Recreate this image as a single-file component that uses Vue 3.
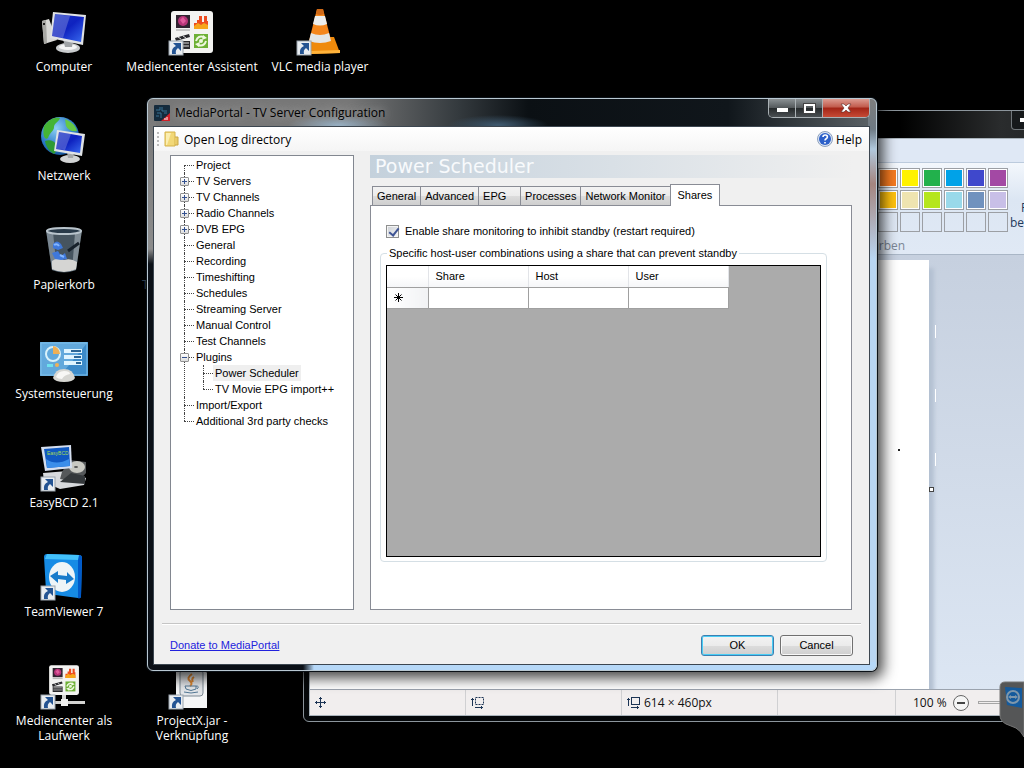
<template>
  <div class="desktop">
    <ul class="shortcuts">
      <li
        v-for="s in shortcuts"
        :key="s.icon"
        class="shortcut"
        :style="{ gridColumn: s.col, gridRow: s.row }"
      >
        <svg class="shortcut-icon" viewBox="0 0 48 48" aria-hidden="true">
          <g v-if="s.icon === 'computer'">
            <path d="M2 13 9 11 17 32 4 36z" fill="#d9d9d6" />
            <path d="M2 13 6 12 7 35 4 36z" fill="#a8a8a4" />
            <path d="M3 15h2v2H3z" fill="#222" />
            <ellipse cx="28" cy="40" rx="12" ry="5" fill="#c9ccce" />
            <ellipse cx="28" cy="39" rx="9" ry="3" fill="#f4f5f5" />
            <path d="M23 31 33 33 32 39 25 39z" fill="#9fa3a6" />
            <path d="M13 4 46 7 43 37 10 30z" fill="#e0e2e4" />
            <path d="M15 6 44 9 41 34 12 28z" fill="url(#screen)" />
            <path d="M15 6 30 8 23 30 12 28z" fill="#fff" opacity=".22" />
          </g>
          <g v-else-if="s.icon === 'network'">
            <circle cx="20" cy="19" r="19" fill="url(#globe)" />
            <path d="M4 9C9 2 15 0 20 1c-1 4-6 5-6 9s-4 5-6 11c-3 3-6-3-4-12z" fill="#45b435" />
            <path d="M25 2c7 3 11 7 12 12-5 1-9-1-11-5z" fill="#65c846" />
            <path d="M5 24c5-2 9 0 12 4 1 4-1 7-3 9-5-3-8-7-9-13z" fill="#2f9b35" />
            <ellipse cx="30" cy="42" rx="10" ry="4" fill="#d2d4d5" />
            <path d="M27 35h7l-1 6h-5z" fill="#a5a8aa" />
            <path d="M17 13 45 17 42 39 14 34z" fill="#dfe2e5" />
            <path d="M19 15 42 19 40 36 16 32z" fill="url(#screen)" />
            <path d="M19 15 31 17 25 33 16 32z" fill="#fff" opacity=".22" />
          </g>
          <g v-else-if="s.icon === 'trash'">
            <path d="M6 4 42 4 36 44Q24 49 12 44z" fill="#46545f" />
            <path d="M6 4 13 6 17 45 12 44z" fill="#9ba9b3" opacity=".6" />
            <path d="M42 4 35 7 32 45 36 44z" fill="#aab5bd" opacity=".6" />
            <path d="M12 35Q17 31 24 34 31 32 37 36L36 43Q24 49 12 43z" fill="#d5d5d3" />
            <path d="M28 25 39 17" stroke="#17212b" stroke-width="3" />
            <path d="M13 18q4-5 8 0l2 4-5 2-5-2zM12 27l6-2 3 5 4-3 2 6-6 1-6-1z" fill="#3f78db" />
            <path d="M14 19q3-2 5 1M20 29l4 2" stroke="#83b6ff" stroke-width="2" fill="none" />
            <ellipse cx="24" cy="5" rx="17" ry="3" fill="#293a49" stroke="#b9c4cc" stroke-width="2" />
          </g>
          <g v-else-if="s.icon === 'control'">
            <path d="M0 7h48v34H0z" fill="#3c8bc9" />
            <path d="M0 7h48L20 41H0z" fill="#62a9dc" />
            <path d="M1 8h46v32H1z" fill="none" stroke="#7fc0ea" />
            <circle cx="13" cy="19" r="7" fill="none" stroke="#d9f2fb" stroke-width="2" />
            <path d="M13 11a8 8 0 0 1 7 8h-7z" fill="#efb056" />
            <path d="M24 14h18v4H24zM24 20h18v4H24zM24 26h18v4H24z" fill="#dff5ff" />
            <path d="M31 15h10v2H31zM34 21h7v2h-7zM36 27h5v2h-5z" fill="#2b6797" />
            <path d="M7 29h6v3H7z" fill="#6fe2ef" />
            <circle cx="17" cy="30" r="2" fill="#efb056" />
            <path d="M13 43Q15 34 24 34t11 9q-2 4-11 4t-11-4z" fill="#d6d6d2" />
            <path d="M16 42Q18 36 24 36t6 3q-6 1-8 5-4 0-6-2z" fill="#f7f7f5" />
          </g>
          <g v-else-if="s.icon === 'easybcd'">
            <path d="M3 29 28 27 46 34 44 41 20 45 4 38z" fill="#d7d9dc" />
            <path d="M22 28 29 16 46 18 46 29 38 38 20 35z" fill="#55585a" />
            <ellipse cx="37" cy="23" rx="8" ry="6" fill="#c9c9c2" />
            <ellipse cx="36" cy="23" rx="2" ry="1" fill="#555" />
            <path d="M20 38 45 40 45 32 31 29z" fill="#34383b" />
            <path d="M1 3 31 1 32 24 5 27z" fill="#d5dff0" />
            <path d="M4 5 29 3 30 22 7 24z" fill="#1059c2" />
            <path d="M6 15Q16 22 29 15L30 22 7 24z" fill="#3b8eea" />
            <text x="7" y="11" font-size="5" font-family="Liberation Sans, sans-serif" fill="#a6d954">EasyBCD</text>
          </g>
          <g v-else-if="s.icon === 'teamviewer'">
            <path d="M7 1 39 2Q42 2 42 5L41 43Q41 46 38 45L8 41Q6 40 6 38L4 4Q4 1 7 1z" fill="#168be5" />
            <path d="M38 2Q42 2 42 5L41 43Q41 46 38 45z" fill="#0059c9" />
            <path d="M7 1 39 2 38 7 5 6z" fill="#43c1fb" />
            <ellipse cx="22" cy="24" rx="13" ry="15" fill="#eef4f7" />
            <path d="M10 23l8-5v4l9 1v-4l7 7-8 5v-4l-8-1v4z" fill="#187bcb" />
          </g>
          <g v-else-if="s.icon === 'laufwerk'">
            <path d="M15 39h30v3H15z" fill="#d4d4d2" />
            <path d="M22 32h4v6h-4z" fill="#d4d4d2" />
            <path d="M21 37h7v7h-7z" fill="#f0f0ee" />
            <g transform="translate(7 1) scale(.71)">
              <use href="#media-card" />
            </g>
          </g>
          <g v-else-if="s.icon === 'mediencenter'">
            <g id="media-card">
              <rect x="3" y="3" width="42" height="42" rx="3" fill="#f3f3f1" />
              <path d="M8 7h14v13H8z" fill="#302330" />
              <circle cx="15" cy="13" r="5" fill="#b73478" />
              <path d="M12 12l3-3 3 4-3 3z" fill="#e15b9c" />
              <path d="M8 22h14" stroke="#999" />
              <path d="M26 15h3v-3h2v-4h3v6h2V8h3v5h1v8H26z" fill="#ed4c20" />
              <path d="M26 18l4-3 3 2 3-2 4 2v4H26z" fill="#f6a51b" />
              <path d="M7 30l14-4 1 3-14 4zM8 33h14v8H8z" fill="#29292c" />
              <path d="M10 29l3 2M15 28l3 2M9 35h12M9 38h12" stroke="#ddd" />
              <rect x="26" y="26" width="14" height="14" fill="#6db035" />
              <path d="M28 33q2-6 8-4M38 33q-2 6-8 4" fill="none" stroke="#eef7df" stroke-width="2" />
              <path d="M35 27l4 3-5 2zM31 39l-4-3 5-2z" fill="#eef7df" />
              <circle cx="33" cy="33" r="2" fill="#eef7df" />
            </g>
          </g>
          <g v-else-if="s.icon === 'vlc'">
            <path d="M17 29 38 29 44 45 14 46 13 40z" fill="#ef8a0c" />
            <path d="M14 43 44 42 44 45 14 46z" fill="#ffb33b" />
            <path d="M21 1h6l8 31q-9 6-22 1z" fill="#f5871c" />
            <path d="M19 8h10l2 8q-7 3-14 0z" fill="#eceeed" />
            <path d="M15 25q9 4 18 0l2 8q-11 4-22 0z" fill="#e4e6e5" />
            <path d="M21 1h6l1 5q-4 2-8 0z" fill="#cf6917" />
          </g>
          <g v-else-if="s.icon === 'projectx'">
            <path d="M8 6h28l3 5v35H8z" fill="#f5f6f7" />
            <rect x="12" y="8" width="23" height="26" rx="3" fill="#e3e6e9" stroke="#7d8994" />
            <path d="M24 12q-6 4-2 7 3 3 0 5M26 15q-3 2-1 5" fill="none" stroke="#e28a32" stroke-width="2" />
            <path d="M17 24h11v3q-5 3-10 0zM28 24q4 0 1 3M16 30q7 2 14 0" fill="none" stroke="#547996" />
          </g>
          <g v-if="s.link">
            <rect x="1" y="33" width="14" height="14" fill="#e9edf1" stroke="#9aa4ad" />
            <path d="M5 35h8v8l-3-3q-3 2-2 6H4q-1-6 4-8z" fill="#245493" />
          </g>
        </svg>
        <span class="shortcut-label">{{ s.label }}</span>
      </li>
      <li class="shortcut covered">T</li>
    </ul>

    <section class="paint" aria-label="Paint">
      <div class="paint-title">
        <button class="paint-min" aria-label="Minimieren"><span class="bar"></span></button>
      </div>
      <div class="paint-client">
        <div class="ribbon-tabs"></div>
        <div class="ribbon">
          <div class="colours">
            <div class="swatches">
              <button
                v-for="(c, i) in swatches"
                :key="i"
                class="swatch"
                :style="{ backgroundColor: c }"
                :aria-label="'Farbe ' + (i + 1)"
              ></button>
            </div>
            <span class="group-name">Farben</span>
          </div>
          <button class="edit-palette">
            <span>Palette</span>
            <span>bearbeiten</span>
          </button>
        </div>
        <div class="workspace">
          <div class="canvas">
            <i class="pixel"></i>
            <i class="handle"></i>
          </div>
          <div class="marks"><i></i><i></i><i></i></div>
        </div>
        <footer class="statusbar">
          <span class="status">
            <svg width="13" height="13" viewBox="0 0 13 13" fill="none" stroke="#1c3454">
              <path d="M6.500 1v11M1 6.500h11M5 2.500h3M5 10.500h3M2.500 5v3M10.500 5v3" />
            </svg>
          </span>
          <span class="status">
            <svg width="15" height="13" viewBox="0 0 15 13" fill="none" stroke="#1c3454">
              <path d="M2.500 10V2M1 3.500h3M5 11.500h8M11.500 10v3" />
              <rect x="5.500" y="1.500" width="8" height="7" stroke-dasharray="2 1" />
            </svg>
          </span>
          <span class="status">
            <svg width="15" height="13" viewBox="0 0 15 13" fill="none" stroke="#1c3454">
              <path d="M2.500 10V2M1 3.500h3M5 11.500h8M11.500 10v3" />
              <rect x="5.500" y="1.500" width="8" height="7" />
            </svg>
            614 × 460px
          </span>
          <span class="status gap"></span>
          <span class="status zoom">
            100 %
            <button class="zoom-out" aria-label="Verkleinern"><span></span></button>
            <span class="track"></span>
          </span>
        </footer>
      </div>
    </section>

    <section class="dialog" aria-label="MediaPortal - TV Server Configuration">
      <header class="titlebar">
        <svg class="app-icon" viewBox="0 0 16 16" aria-hidden="true">
          <rect width="16" height="16" rx="1" fill="#152b3d" />
          <path d="M2 5h4V2M8 2v4h5M3 8h4v5M10 8h3M2 11h3" stroke="#397394" fill="none" />
          <path d="M16 8v8H7z" fill="#d01f28" />
          <path d="M10 14h2M13 12v3" stroke="#fff" />
        </svg>
        <h1>MediaPortal - TV Server Configuration</h1>
        <div class="window-buttons">
          <button class="win-min" aria-label="Minimize"><span class="bar"></span></button>
          <button class="win-max" aria-label="Maximize"><span></span></button>
          <button class="win-close" aria-label="Close">
            <svg width="12" height="10" viewBox="0 0 12 10">
              <path d="M1 1h3l2 2 2-2h3L8 5l3 4H8L6 7 4 9H1l3-4z" fill="#fff" stroke="#5b2b26" stroke-width=".6" />
            </svg>
          </button>
        </div>
      </header>

      <div class="client">
        <nav class="toolbar">
          <i class="grip"></i>
          <button>
            <svg width="16" height="16" viewBox="0 0 16 16">
              <path d="M1 1h10v14H1z" fill="#f2d878" stroke="#d5b24a" />
              <path d="M11 6h3v8h-3" fill="#e9cb69" stroke="#c9a747" />
              <path d="M2 2h5L3 14H2z" fill="#fbeeb0" />
            </svg>
            Open Log directory
          </button>
          <button class="help">
            <svg width="16" height="16" viewBox="0 0 16 16">
              <circle cx="8" cy="8" r="7.500" fill="#dbe5f4" stroke="#8da0bd" />
              <circle cx="8" cy="8" r="6" fill="#2c60c9" />
              <path d="M6 6q0-2 2.200-2T10.400 6q0 1-1.200 1.700T8 9.500M8 11v1.600" fill="none" stroke="#fff" stroke-width="1.600" />
            </svg>
            Help
          </button>
        </nav>

        <div class="content">
          <ul class="tree">
            <li v-for="n in tree" :key="n.name">
              <span class="node">
                <button v-if="n.sign" class="toggle" :class="n.sign" :aria-label="n.name"></button>
                <span class="name">{{ n.name }}</span>
              </span>
              <ul v-if="n.children">
                <li v-for="c in n.children" :key="c">
                  <span class="node">
                    <span class="name" :class="{ selected: c === selected }" @click="selected = c">{{ c }}</span>
                  </span>
                </li>
              </ul>
            </li>
          </ul>

          <main class="settings">
            <h2>Power Scheduler</h2>
            <div class="tabs" role="tablist">
              <button
                v-for="t in tabs"
                :key="t"
                role="tab"
                :aria-selected="t === activeTab"
                :class="{ active: t === activeTab }"
                @click="activeTab = t"
              >{{ t }}</button>
            </div>
            <div class="panel">
              <div class="check">
                <input id="monitoring" v-model="monitoring" type="checkbox" />
                <label for="monitoring">Enable share monitoring to inhibit standby (restart required)</label>
              </div>
              <fieldset>
                <legend>Specific host-user combinations using a share that can prevent standby</legend>
                <div class="grid">
                  <table>
                    <thead>
                      <tr>
                        <th class="row-head"></th>
                        <th v-for="h in columns" :key="h">{{ h }}</th>
                      </tr>
                    </thead>
                    <tbody>
                      <tr>
                        <th class="row-head">
                          <svg width="9" height="9" viewBox="0 0 9 9" stroke="#000">
                            <path d="M4.500 0v9M0 4.500h9M1.500 1.500l6 6M7.500 1.500l-6 6" />
                          </svg>
                        </th>
                        <td v-for="h in columns" :key="h"></td>
                      </tr>
                    </tbody>
                  </table>
                </div>
              </fieldset>
            </div>
          </main>
        </div>

        <footer class="actions">
          <a href="#donate">Donate to MediaPortal</a>
          <button class="default">OK</button>
          <button>Cancel</button>
        </footer>
      </div>
    </section>

    <svg class="tv-tab" width="25" height="56" viewBox="0 0 25 56" aria-hidden="true">
      <path d="M25 1H6Q1 1 1 6V34Q1 40 7 43L17 47Q22 50 25 56z" fill="#555657" stroke="#777" />
      <path d="M6 6 23 7 23 27 8 24z" fill="#155a9c" />
      <circle cx="14" cy="16" r="6" fill="none" stroke="#7f97ab" stroke-width="2" />
      <path d="M9 16l3-2v1h4v-1l3 2-3 2v-1h-4v1z" fill="#7f97ab" />
    </svg>

    <svg width="0" height="0" class="defs" aria-hidden="true">
      <defs>
        <linearGradient id="screen" x1="0" y1="0" x2="1" y2="1">
          <stop offset="0" stop-color="#1a35c4" />
          <stop offset=".5" stop-color="#0e22c0" />
          <stop offset="1" stop-color="#3a6cf0" />
        </linearGradient>
        <radialGradient id="globe" cx=".4" cy=".3" r=".8">
          <stop offset="0" stop-color="#8fd0f6" />
          <stop offset=".6" stop-color="#2a79c8" />
          <stop offset="1" stop-color="#134a8c" />
        </radialGradient>
      </defs>
    </svg>
  </div>
</template>

<script setup>
import { ref } from 'vue'

const shortcuts = [
  { icon: 'computer', label: 'Computer', col: 1, row: 1 },
  { icon: 'network', label: 'Netzwerk', col: 1, row: 2 },
  { icon: 'trash', label: 'Papierkorb', col: 1, row: 3 },
  { icon: 'control', label: 'Systemsteuerung', col: 1, row: 4 },
  { icon: 'easybcd', label: 'EasyBCD 2.1', col: 1, row: 5, link: true },
  { icon: 'teamviewer', label: 'TeamViewer 7', col: 1, row: 6, link: true },
  { icon: 'laufwerk', label: 'Mediencenter als\nLaufwerk', col: 1, row: 7, link: true },
  { icon: 'mediencenter', label: 'Mediencenter Assistent', col: 2, row: 1, link: true },
  { icon: 'vlc', label: 'VLC media player', col: 3, row: 1, link: true },
  { icon: 'projectx', label: 'ProjectX.jar -\nVerknüpfung', col: 2, row: 7, link: true },
]

const swatches = [
  '#f57a20', '#fff200', '#22b14c', '#00a2e8', '#3f48cc', '#a349a4',
  '#ffc20e', '#efe4b0', '#b5e61d', '#99d9ea', '#7092be', '#c8bfe7',
  'transparent', 'transparent', 'transparent', 'transparent', 'transparent', 'transparent',
]

const tree = [
  { name: 'Project' },
  { name: 'TV Servers', sign: 'plus' },
  { name: 'TV Channels', sign: 'plus' },
  { name: 'Radio Channels', sign: 'plus' },
  { name: 'DVB EPG', sign: 'plus' },
  { name: 'General' },
  { name: 'Recording' },
  { name: 'Timeshifting' },
  { name: 'Schedules' },
  { name: 'Streaming Server' },
  { name: 'Manual Control' },
  { name: 'Test Channels' },
  { name: 'Plugins', sign: 'minus', children: ['Power Scheduler', 'TV Movie EPG import++'] },
  { name: 'Import/Export' },
  { name: 'Additional 3rd party checks' },
]
const selected = ref('Power Scheduler')

const tabs = ['General', 'Advanced', 'EPG', 'Processes', 'Network Monitor', 'Shares']
const activeTab = ref('Shares')
const monitoring = ref(true)
const columns = ['Share', 'Host', 'User']
</script>

<style>
body {
  margin: 0;
  background: #000;
}
</style>

<style scoped>
* {
  box-sizing: border-box;
}

ul {
  list-style: none;
  margin: 0;
  padding: 0;
}

button {
  margin: 0;
  padding: 0;
  border: 0;
  background: none;
  font: inherit;
  color: inherit;
}

.desktop {
  position: relative;
  height: 100vh;
  overflow: hidden;
  background: #000;
  font: 12px/15px "Open Sans", "Noto Sans", sans-serif;
}

.defs {
  position: absolute;
}

/* desktop icons */
.shortcuts {
  display: grid;
  grid-template-columns: repeat(3, 128px);
  grid-auto-rows: 109px;
}

.shortcut {
  display: flex;
  flex-direction: column;
  align-items: center;
  padding-top: 8px;
  color: #fff;
  text-align: center;
}

.shortcut-icon {
  width: 48px;
  height: 48px;
  margin-bottom: 3px;
}

.shortcut-label {
  white-space: pre;
}

.covered {
  grid-column: 2;
  grid-row: 3;
  align-items: flex-start;
  padding: 59px 0 0 14px;
  color: #3c5163;
}

/* paint window */
.paint {
  position: absolute;
  top: 110px;
  right: -136px;
  bottom: 46px;
  left: 303px;
  display: flex;
  flex-direction: column;
  padding: 0 6px 5px 5px;
  border: 1px solid #8c959c;
  border-radius: 6px;
  background: #05080a;
}

.paint-title {
  display: flex;
  justify-content: flex-end;
  height: 27px;
  padding-right: 40px;
  background: linear-gradient(90deg, #000 70%, #2a2c2d 82%, #151718);
}

.paint-min {
  width: 102px;
  height: 19px;
  padding-left: 8px;
  border: 1px solid #70767a;
  border-top: 0;
  border-radius: 0 0 4px 4px;
  background: #16191b;
}

.bar {
  display: block;
  width: 11px;
  height: 4px;
  background: #fff;
}

.paint-client {
  flex: 1;
  display: flex;
  flex-direction: column;
  min-height: 0;
  border: 1px solid #a9b3bb;
}

.ribbon-tabs {
  height: 24px;
  border-bottom: 1px solid #bccbdd;
  background: #dfe8f5;
}

.ribbon {
  display: flex;
  gap: 2px;
  height: 92px;
  padding: 5px 0 0 546px;
  border-bottom: 1px solid #a9b6c6;
  background: linear-gradient(#f3f7fc, #dce6f3 40%, #e0e9f5);
}

.colours {
  display: flex;
  flex-direction: column;
}

.swatches {
  display: grid;
  grid-template-columns: repeat(6, 20px);
  grid-auto-rows: 20px;
  gap: 2px;
  margin-left: 22px;
}

.swatch {
  border: 1px solid #9c9fa4;
  box-shadow: inset 0 0 0 1px #fff;
}

.swatch:nth-child(n + 13) {
  box-shadow: none;
}

.group-name {
  margin-top: 6px;
  padding-left: 10px;
  color: #7b8694;
}

.edit-palette {
  display: flex;
  flex-direction: column;
  align-items: center;
  align-self: flex-start;
  margin-top: 32px;
  color: #1e395b;
}

.workspace {
  flex: 1;
  display: flex;
  padding-top: 5px;
  background: linear-gradient(#c6d0df, #dce6f3);
  overflow: hidden;
}

.canvas {
  position: relative;
  width: 619px;
  background: #fff;
  box-shadow: 5px 8px 4px #b4c1d2;
}

.pixel {
  position: absolute;
  top: 189px;
  right: 29px;
  width: 2px;
  height: 2px;
  background: #222;
}

.handle {
  position: absolute;
  top: 227px;
  right: -5px;
  width: 5px;
  height: 5px;
  border: 1px solid #444;
  background: #fff;
}

.marks {
  display: flex;
  flex-direction: column;
  gap: 51px;
  padding: 65px 0 0 6px;
  z-index: 1;
}

.marks i {
  width: 1px;
  height: 13px;
  background: #fff;
}

.statusbar {
  display: flex;
  height: 26px;
  border-top: 1px solid #9ba3ae;
  background: #f1eeee;
}

.status {
  display: flex;
  align-items: center;
  gap: 3px;
  width: 156px;
  padding-left: 4px;
  border-right: 1px solid #d0d0d2;
  color: #111;
}

.gap {
  width: 118px;
}

.zoom {
  gap: 6px;
  width: 240px;
  padding-left: 17px;
}

.zoom-out {
  display: flex;
  align-items: center;
  justify-content: center;
  width: 16px;
  height: 16px;
  border: 1px solid #666;
  border-radius: 50%;
  background: #f5f5f5;
}

.zoom-out span {
  width: 8px;
  height: 2px;
  background: #444;
}

.track {
  width: 100px;
  height: 3px;
  margin-left: 3px;
  border: 1px solid #a5a5a5;
  border-right: 0;
}

/* dialog */
.dialog {
  position: absolute;
  top: 98px;
  right: 147px;
  bottom: 97px;
  left: 147px;
  display: flex;
  flex-direction: column;
  padding: 0 6px 5px 5px;
  border: 1px solid #b9c8d2;
  border-radius: 6px;
  background:
    radial-gradient(ellipse 50px 10px at 190px 26px, #9dbcd5cc, transparent),
    radial-gradient(ellipse 50px 10px at 350px 26px, #3f5a70, transparent),
    linear-gradient(90deg, #0b1017 155px, #b6d8f8 166px) 0 100% / 100% 8px no-repeat,
    linear-gradient(#7d7d7d, #6e7a84 30px, #b0c8dd 50px, #a5857f 85px, #b9d6f2 160px) 100% 0 / 8px 100% no-repeat,
    linear-gradient(#777, #8c8c8c 150px, #0b1017 165px) 0 0 / 8px 100% no-repeat,
    linear-gradient(90deg, #777 0, #777 200px, #343a3e 310px, #0b1014 380px, #10161b 580px, #5d6468);
  box-shadow: 0 0 0 1px #0b1117, 3px 4px 14px 3px #000b;
}

.titlebar {
  display: flex;
  align-items: center;
  height: 27px;
  padding-left: 1px;
}

.app-icon {
  width: 16px;
  height: 16px;
  margin-right: 5px;
}

h1 {
  flex: 1;
  margin: 0;
  color: #000;
  font: inherit;
  text-shadow: 0 0 8px #bbb;
}

.window-buttons {
  display: flex;
  align-self: flex-start;
  height: 19px;
  border: 1px solid #aab1b5;
  border-top: 0;
  border-radius: 0 0 5px 5px;
  overflow: hidden;
}

.window-buttons button {
  display: flex;
  align-items: center;
  justify-content: center;
  width: 27px;
  border-right: 1px solid #aab1b5;
  background: linear-gradient(#8b9194, #54595c 48%, #25292b 50%, #4a4f52);
}

.win-max span {
  width: 11px;
  height: 9px;
  border: 2px solid #fff;
  outline: 1px solid #444;
}

.win-min .bar {
  margin-top: 4px;
}

.window-buttons .win-close {
  width: 46px;
  border-right: 0;
  background: linear-gradient(#dd9b90, #c15a4b 45%, #a22416 50%, #c64a35);
}

.client {
  flex: 1;
  display: flex;
  flex-direction: column;
  min-height: 0;
  border: 1px solid #3c4650;
  background: #f0f0f0;
}

.toolbar {
  display: flex;
  align-items: center;
  height: 24px;
  padding: 0 7px 0 3px;
  background: linear-gradient(#fff, #f5f5f5);
}

.toolbar button {
  display: flex;
  align-items: center;
  gap: 4px;
}

.grip {
  width: 2px;
  height: 15px;
  margin-right: 5px;
  background: repeating-linear-gradient(#bbb 0 2px, transparent 2px 4px);
}

.toolbar .help {
  gap: 3px;
  margin-left: auto;
}

.content {
  flex: 1;
  display: flex;
  gap: 16px;
  min-height: 0;
  padding: 4px 17px 0 16px;
  font: 11px/16px "Liberation Sans", Arial, sans-serif;
}

.tree {
  width: 184px;
  padding: 1px 0 0 12px;
  border: 1px solid #828790;
  background: #fff;
}

.tree li {
  position: relative;
}

.tree li::before {
  content: "";
  position: absolute;
  top: 0;
  left: 1px;
  height: 100%;
  border-left: 1px dotted #444;
}

.tree li:first-child::before {
  top: 8px;
}

.tree li:last-child::before {
  height: 8px;
}

.node {
  display: flex;
  align-items: center;
  height: 16px;
}

.node::before {
  content: "";
  width: 10px;
  margin-left: 1px;
  border-top: 1px dotted #444;
}

.name {
  padding: 0 2px;
  white-space: nowrap;
}

.selected {
  background: #efefef;
}

.tree ul {
  padding-left: 19px;
}

.tree ul li:first-child::before {
  top: 0;
}

.toggle {
  position: absolute;
  top: 4px;
  left: -3px;
  width: 9px;
  height: 9px;
  border: 1px solid #919191;
  border-radius: 1px;
  background:
    linear-gradient(#33508f, #33508f) center / 5px 1px no-repeat,
    linear-gradient(#fff, #ddd);
}

.toggle.plus {
  background:
    linear-gradient(#33508f, #33508f) center / 5px 1px no-repeat,
    linear-gradient(#33508f, #33508f) center / 1px 5px no-repeat,
    linear-gradient(#fff, #ddd);
}

.settings {
  flex: 1;
  display: flex;
  flex-direction: column;
  min-width: 0;
}

h2 {
  height: 23px;
  margin: 0 -2px 6px 0;
  padding-left: 5px;
  background: linear-gradient(90deg, #c4d1dc, #d9e0e6 50%, #f0f0f0);
  color: #f8fafc;
  font: 19px/23px "DejaVu Sans", Verdana, sans-serif;
}

.tabs {
  display: flex;
  align-items: flex-end;
  height: 21px;
  padding-left: 2px;
}

.tabs button {
  min-width: 42px;
  height: 19px;
  padding: 0 4px;
  border: 1px solid #898c95;
  border-width: 1px 1px 0 0;
  background: linear-gradient(#f3f3f3, #ebebeb 50%, #dcdcdc 52%, #cfcfcf);
  text-align: left;
}

.tabs button:first-child {
  border-left-width: 1px;
}

.tabs .active {
  position: relative;
  height: 22px;
  margin: 0 0 -1px -1px;
  padding: 0 7px 2px;
  border-left-width: 1px;
  background: #fff;
}

.panel {
  flex: 1;
  display: flex;
  flex-direction: column;
  padding: 17px 24px 47px 9px;
  border: 1px solid #898c95;
  background: #fff;
}

.check {
  display: flex;
  align-items: center;
  gap: 6px;
  padding-left: 6px;
}

.check input {
  appearance: none;
  width: 13px;
  height: 13px;
  margin: 0;
  border: 1px solid #8e8f8f;
  background: linear-gradient(135deg, #ccd0d5, #f6f6f6);
  box-shadow: inset 0 0 0 1px #f4f4f4;
}

.check input:checked::before {
  content: "";
  display: block;
  width: 4px;
  height: 8px;
  margin: 0 0 0 4px;
  border: solid #3f5494;
  border-width: 0 2px 2px 0;
  transform: rotate(38deg);
}

fieldset {
  flex: 1;
  display: flex;
  flex-direction: column;
  min-width: 0;
  margin: 6px 0 0;
  padding: 4px 5px;
  border: 1px solid #d5dfe5;
  border-radius: 4px;
}

legend {
  margin-left: 1px;
  padding: 0 2px;
}

.grid {
  flex: 1;
  border: 1px solid #000;
  background: #ababab;
}

table {
  border-collapse: collapse;
  table-layout: fixed;
  width: 341px;
}

th,
td {
  width: 100px;
  height: 21px;
  padding: 0 7px;
  border: 1px solid #a0a0a0;
  border-width: 0 1px 1px 0;
  background: #fff;
  font-weight: normal;
  text-align: left;
  line-height: 16px;
}

thead th {
  border-right-color: #e2e4e8;
  background: linear-gradient(#fff 50%, #f5f6f8);
}

.row-head {
  width: 41px;
}

tbody .row-head {
  background: linear-gradient(90deg, #fff, #f1f2f4);
  line-height: 9px;
}

.actions {
  display: flex;
  align-items: center;
  gap: 6px;
  height: 41px;
  margin: 13px 8px 0;
  padding: 2px 8px 0;
  border-top: 1px solid #c5c5c5;
  box-shadow: inset 0 1px #fff;
  font: 11px/16px "Liberation Sans", Arial, sans-serif;
}

.actions a {
  margin-right: auto;
  color: #2222dd;
}

.actions button {
  width: 73px;
  height: 21px;
  border: 1px solid #707070;
  border-radius: 3px;
  background: linear-gradient(#f3f3f3, #ebebeb 50%, #dcdcdc 52%, #cfcfcf);
  box-shadow: inset 0 0 0 1px #f8f8f8;
}

.actions .default {
  border-color: #3c7fb1;
  box-shadow: inset 0 0 0 1px #48cdf5;
}

/* quick connect tab at the screen edge */
.tv-tab {
  position: absolute;
  right: 0;
  bottom: 31px;
}
</style>
